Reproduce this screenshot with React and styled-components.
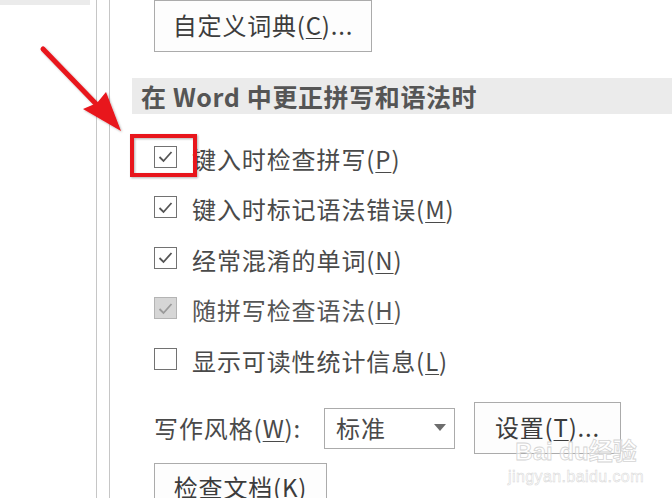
import React from "react";
import styled, { createGlobalStyle } from "styled-components";

const Global = createGlobalStyle`
  html, body { margin: 0; padding: 0; background: #fff; }
  body {
    width: 672px; height: 498px; overflow: hidden;
    font-family: "Noto Sans CJK SC", "Noto Sans", sans-serif;
    color: #4a4a4a;
  }
`;

const Page = styled.div`
  position: relative;
  display: flex;
  width: 672px;
  height: 498px;
  overflow: hidden;
  background: #fff;
`;

const Nav = styled.div`
  width: 96px;
  flex: none;
  border-right: 1px solid #c6c6c6;
  display: flex;
  flex-direction: column;
`;

const NavBar = styled.div`
  width: 90px;
  height: 5px;
  background: #ebebeb;
`;

const Spacer = styled.div`
  width: 12px;
  flex: none;
  border-right: 1px solid #c6c6c6;
`;

const Content = styled.div`
  flex: 1;
  display: flex;
  flex-direction: column;
  padding-left: 22px;
`;

const Indent = styled.div`
  padding-left: 22px;
  display: flex;
  flex-direction: column;
`;

const Button = styled.button`
  font-family: inherit;
  font-size: 24px;
  line-height: 1;
  letter-spacing: 0.8px;
  color: #3c3c3c;
  background: #fdfdfd;
  border: 1px solid #ababab;
  box-sizing: border-box;
  height: ${(p) => p.$h || 52}px;
  width: ${(p) => p.$w}px;
  padding: 0 0 2px;
  display: flex;
  align-items: center;
  justify-content: center;
  flex: none;
  u { text-underline-offset: 3px; text-decoration-thickness: 1px; }
`;

const TopButton = styled(Button)`
  margin-top: 0;
  align-self: flex-start;
`;

const Header = styled.div`
  margin-top: 26px;
  height: 45px;
  background: #ebebeb;
  display: flex;
  align-items: center;
  padding-left: 9px;
  font-size: 25px;
  font-weight: 700;
  color: #555;
  letter-spacing: 0.6px;
`;

const List = styled.div`
  margin-top: 19px;
  display: flex;
  flex-direction: column;
`;

const Row = styled.div`
  height: 50.5px;
  display: flex;
  align-items: center;
  gap: 15px;
  font-size: 24px;
  letter-spacing: 0.9px;
  color: ${(p) => (p.$disabled ? "#555" : "#4a4a4a")};
  u { text-underline-offset: 3px; text-decoration-thickness: 1px; }
`;

const Box = styled.span`
  width: 23px;
  height: 22px;
  box-sizing: border-box;
  border: 1px solid ${(p) => (p.$disabled ? "#b4b4b4" : "#727272")};
  background: ${(p) => (p.$disabled ? "#d6d6d6" : "#fff")};
  display: flex;
  align-items: center;
  justify-content: center;
  margin-top: -3px;
  flex: none;
`;

const StyleRow = styled.div`
  margin-top: 16px;
  display: flex;
  align-items: center;
  height: 52px;
  font-size: 24px;
  letter-spacing: 0.9px;
  color: #4a4a4a;
  u { text-underline-offset: 3px; text-decoration-thickness: 1px; }
`;

const Label = styled.span`
  width: 170px;
  flex: none;
`;

const Select = styled.div`
  width: 131px;
  height: 41px;
  box-sizing: border-box;
  border: 1px solid #ababab;
  background: #fff;
  display: flex;
  align-items: center;
  justify-content: space-between;
  padding: 0 8px 2px 11px;
  color: #4a4a4a;
  margin-top: 2px;
`;

const Gap = styled.div`
  width: 19px;
  flex: none;
`;

const BottomButton = styled(Button)`
  margin-top: 9px;
  align-self: flex-start;
`;

const Overlay = styled.svg`
  position: absolute;
  left: 0;
  top: 0;
  pointer-events: none;
`;

const Watermark = styled.div`
  position: absolute;
  left: 514px;
  top: 441px;
  width: 124px;
  display: flex;
  flex-direction: column;
  align-items: center;
  color: rgba(255, 255, 255, 0.55);
  -webkit-text-stroke: 0.8px #d4d4d4;
  font-family: "Liberation Sans", "Noto Sans CJK SC", sans-serif;
  pointer-events: none;
`;

const WmTop = styled.div`
  font-size: 24px;
  font-weight: 700;
  line-height: 22px;
  white-space: nowrap;
`;

const WmBottom = styled.div`
  font-size: 16px;
  line-height: 16px;
  margin-top: 6px;
  letter-spacing: 0.4px;
  white-space: nowrap;
  -webkit-text-stroke: 0.5px #d6d6d6;
`;

const Check = ({ disabled }) => (
  <svg width="15" height="13" viewBox="0 0 15 13">
    <polyline
      points="1.5,7 5.5,11 13.5,2"
      fill="none"
      stroke={disabled ? "#9a9a9a" : "#555"}
      strokeWidth="1.8"
    />
  </svg>
);

const CheckRow = ({ checked, disabled, label, k }) => (
  <Row $disabled={disabled}>
    <Box $disabled={disabled}>{checked && <Check disabled={disabled} />}</Box>
    <span>
      {label}(<u>{k}</u>)
    </span>
  </Row>
);

export default function App() {
  return (
    <>
      <Global />
      <Page>
        <Nav>
          <NavBar />
        </Nav>
        <Spacer />
        <Content>
          <Indent>
            <TopButton $w={218} $h={52}>
              自定义词典(<u>C</u>)...
            </TopButton>
          </Indent>
          <Header>在 Word 中更正拼写和语法时</Header>
          <Indent>
            <List>
              <CheckRow checked label="键入时检查拼写" k="P" />
              <CheckRow checked label="键入时标记语法错误" k="M" />
              <CheckRow checked label="经常混淆的单词" k="N" />
              <CheckRow checked disabled label="随拼写检查语法" k="H" />
              <CheckRow label="显示可读性统计信息" k="L" />
            </List>
            <StyleRow>
              <Label>
                写作风格(<u>W</u>):
              </Label>
              <Select>
                <span>标准</span>
                <svg width="12" height="7" viewBox="0 0 12 7">
                  <polygon points="0,0 12,0 6,7" fill="#6d6d6d" />
                </svg>
              </Select>
              <Gap />
              <Button $w={147}>
                设置(<u>T</u>)...
              </Button>
            </StyleRow>
            <BottomButton $w={173} $h={50}>
              检查文档(<u>K</u>)
            </BottomButton>
          </Indent>
        </Content>
        <Watermark>
          <WmTop>Bai du经验</WmTop>
          <WmBottom>jingyan.baidu.com</WmBottom>
        </Watermark>
        <Overlay width="672" height="498" viewBox="0 0 672 498">
          <defs>
            <filter id="sh" x="-20%" y="-20%" width="140%" height="140%">
              <feDropShadow dx="1" dy="1" stdDeviation="1.2" floodColor="#000" floodOpacity="0.3" />
            </filter>
          </defs>
          <g filter="url(#sh)" fill="#e8141b" stroke="none">
            <line x1="43" y1="49" x2="100" y2="108" stroke="#e8141b" strokeWidth="5" strokeLinecap="round" />
            <polygon points="121,131 83,109 97,103 106,92" />
          </g>
          <rect
            x="132"
            y="136"
            width="63"
            height="39"
            fill="none"
            stroke="#e8141b"
            strokeWidth="4"
            filter="url(#sh)"
          />
        </Overlay>
      </Page>
    </>
  );
}
